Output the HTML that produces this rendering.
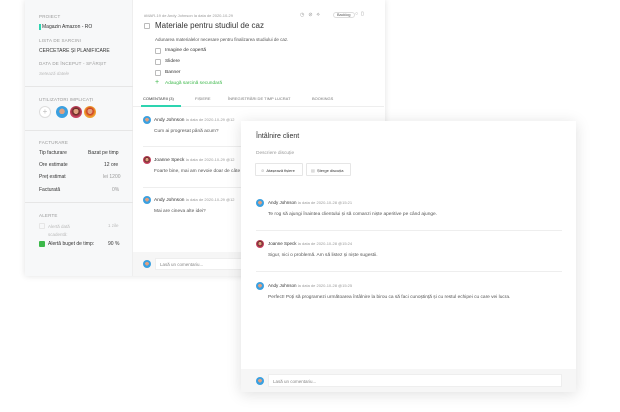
<!DOCTYPE html><html><head><meta charset="utf-8"><style>
*{margin:0;padding:0;box-sizing:border-box}
body{width:620px;height:412px;background:#fff;font-family:"Liberation Sans",sans-serif;position:relative;overflow:hidden;color:#333}
.a{position:absolute;white-space:nowrap}
.lab{font-size:4.5px;color:#999;letter-spacing:.2px}
.t{font-size:5.5px;color:#333}
.s{font-size:4px;color:#999}
.av{position:absolute;border-radius:50%;background:radial-gradient(circle at 50% 45%,#e0a080 0 30%,#3aa0e0 32%)}
.avp{background:radial-gradient(circle at 50% 45%,#e0a080 0 28%,#5a2a20 30%,#c84060 60%)}
.avo{background:radial-gradient(circle at 50% 45%,#e0a080 0 28%,#c83020 30%,#f0a030 60%)}
.cb{position:absolute;width:6px;height:6px;border:1px solid #bbb;border-radius:1px}
</style></head><body>
<!-- back window -->
<div class="a" style="left:25px;top:0;width:360px;height:276px;background:#fff;box-shadow:0 0 6px rgba(0,0,0,.12)"></div>
<div class="a" style="left:25px;top:0;width:108px;height:276px;background:#f7f8f9;border-right:1px solid #eee"></div>
<div class="a lab" style="left:39px;top:14px">PROIECT</div>
<div class="a" style="left:39px;top:24px;width:1.5px;height:6px;background:#2dd4b0"></div>
<div class="a t" style="left:42px;top:24px;font-size:5px">Magazin Amazon - RO</div>
<div class="a lab" style="left:39px;top:38px">LISTA DE SARCINI</div>
<div class="a t" style="left:39px;top:48px;font-size:5px">CERCETARE ȘI PLANIFICARE</div>
<div class="a lab" style="left:39px;top:61px">DATA DE ÎNCEPUT - SFÂRȘIT</div>
<div class="a" style="left:39px;top:71px;font-size:4.5px;color:#bbb;font-style:italic">Setează datele</div>
<div class="a" style="left:25px;top:86px;width:108px;height:1px;background:#e6e6e6"></div>
<div class="a lab" style="left:39px;top:97px">UTILIZATORI IMPLICAȚI</div>
<div class="a" style="left:39px;top:106px;width:12px;height:12px;border:1px solid #ddd;border-radius:50%;background:#fff;font-size:8px;color:#bbb;text-align:center;line-height:10px">+</div>
<div class="av" style="left:56px;top:106px;width:12px;height:12px"></div>
<div class="av avp" style="left:70px;top:106px;width:12px;height:12px"></div>
<div class="av avo" style="left:84px;top:106px;width:12px;height:12px"></div>
<div class="a" style="left:25px;top:130px;width:108px;height:1px;background:#e6e6e6"></div>
<div class="a lab" style="left:39px;top:140px">FACTURARE</div>
<div class="a t" style="left:39px;top:150px;font-size:5px">Tip facturare</div><div class="a t" style="left:88px;top:150px;font-size:5px">Bazat pe timp</div>
<div class="a t" style="left:39px;top:162px;font-size:5px">Ore estimate</div><div class="a t" style="left:104px;top:162px;font-size:5px">12 ore</div>
<div class="a t" style="left:39px;top:174px;font-size:5px">Preț estimat</div><div class="a" style="left:103px;top:174px;font-size:5px;color:#999">lei 1200</div>
<div class="a t" style="left:39px;top:187px;font-size:5px">Facturată</div><div class="a" style="left:112px;top:187px;font-size:5px;color:#999">0%</div>
<div class="a" style="left:25px;top:202px;width:108px;height:1px;background:#e6e6e6"></div>
<div class="a lab" style="left:39px;top:213px">ALERTE</div>
<div class="cb" style="left:39px;top:223px;border-color:#e6e6e6"></div>
<div class="a" style="left:48px;top:223px;font-size:4.5px;color:#bbb;line-height:8px">Alertă dată<br>scadentă:</div><div class="a" style="left:108px;top:223px;font-size:4.5px;color:#bbb">1 zile</div>
<div class="a" style="left:39px;top:241px;width:6px;height:6px;background:#3cb84a;border-radius:1px"></div>
<div class="a t" style="left:48px;top:241px;font-size:5px">Alertă buget de timp:</div><div class="a t" style="left:108px;top:241px;font-size:5px">90 %</div>
<!-- main back -->
<div class="a s" style="left:144px;top:13px">#MAR-19 de Andy Johnson la data de 2020-10-29</div>
<div class="a" style="left:300px;top:12px;font-size:5px;color:#999;letter-spacing:4px">◷⊘⟡</div>
<div class="a" style="left:333px;top:12px;font-size:3.8px;border:1px solid #ddd;border-radius:4px;padding:0 3px;color:#555">Backlog</div>
<div class="a" style="left:355px;top:11px;font-size:5px;color:#999;letter-spacing:3px">○▯</div>
<div class="cb" style="left:144px;top:23px"></div>
<div class="a" style="left:155px;top:21px;font-size:8px;color:#333">Materiale pentru studiul de caz</div>
<div class="a" style="left:155px;top:37px;font-size:4.5px;color:#555">Adunarea materialelor necesare pentru finalizarea studiului de caz.</div>
<div class="cb" style="left:155px;top:48px"></div><div class="a t" style="left:165px;top:48px;font-size:4.8px">Imagine de copertă</div>
<div class="cb" style="left:155px;top:59px"></div><div class="a t" style="left:165px;top:59px;font-size:4.8px">Slidere</div>
<div class="cb" style="left:155px;top:70px"></div><div class="a t" style="left:165px;top:70px;font-size:4.8px">Banner</div>
<div class="a" style="left:155px;top:79px;font-size:7px;color:#3cb84a">+</div><div class="a" style="left:165px;top:81px;font-size:4.8px;color:#3cb84a">Adaugă sarcină secundară</div>
<div class="a" style="left:133px;top:91px;width:251px;height:16px;border-bottom:1px solid #eee"></div>
<div class="a" style="left:143px;top:96px;font-size:4px;color:#333">COMENTARII (3)</div>
<div class="a" style="left:141px;top:105px;width:40px;height:1.5px;background:#2dd4b0"></div>
<div class="a" style="left:195px;top:96px;font-size:4px;color:#777">FIȘIERE</div>
<div class="a" style="left:228px;top:96px;font-size:4px;color:#777">ÎNREGISTRĂRI DE TIMP LUCRAT</div>
<div class="a" style="left:312px;top:96px;font-size:4px;color:#777">BOOKINGS</div>
<div class="av" style="left:143px;top:116px;width:8px;height:8px"></div>
<div class="a" style="left:154px;top:117px;font-size:4.8px;color:#333">Andy Johnson <span class="s">la data de 2020-10-29 @12</span></div>
<div class="a" style="left:154px;top:129px;font-size:4.8px;color:#555">Cum ai progresat până acum?</div>
<div class="a" style="left:143px;top:146px;width:98px;height:1px;background:#eee"></div>
<div class="av avp" style="left:143px;top:156px;width:8px;height:8px"></div>
<div class="a" style="left:154px;top:157px;font-size:4.8px;color:#333">Joanne Speck <span class="s">la data de 2020-10-29 @12</span></div>
<div class="a" style="left:154px;top:169px;font-size:4.8px;color:#555">Foarte bine, mai am nevoie doar de câte</div>
<div class="a" style="left:143px;top:187px;width:98px;height:1px;background:#eee"></div>
<div class="av" style="left:143px;top:196px;width:8px;height:8px"></div>
<div class="a" style="left:154px;top:197px;font-size:4.8px;color:#333">Andy Johnson <span class="s">la data de 2020-10-29 @12</span></div>
<div class="a" style="left:154px;top:209px;font-size:4.8px;color:#555">Mai are cineva alte idei?</div>
<div class="a" style="left:133px;top:252px;width:251px;height:24px;background:#f6f6f6"></div>
<div class="av" style="left:143px;top:260px;width:8px;height:8px"></div>
<div class="a" style="left:155px;top:258px;width:120px;height:12px;background:#fff;border:1px solid #eee;font-size:4.5px;color:#888;padding:3px 4px">Lasă un comentariu...</div>
<!-- front window -->
<div class="a" style="left:241px;top:121px;width:335px;height:271px;background:#fff;box-shadow:0 2px 14px rgba(0,0,0,.13)"></div>
<div class="a" style="left:256px;top:133px;font-size:7px;color:#333">Întâlnire client</div>
<div class="a" style="left:256px;top:151px;font-size:4.8px;color:#999">Descriere discuție</div>
<div class="a" style="left:255px;top:163px;width:48px;height:13px;border:1px solid #e6e6e6;border-radius:1px;font-size:4px;color:#333;padding:4px 0 0 5px"><span style="color:#aaa">⊘</span>&nbsp; Atașează fișiere</div>
<div class="a" style="left:306px;top:163px;width:45px;height:13px;border:1px solid #e6e6e6;border-radius:1px;font-size:4px;color:#333;padding:4px 0 0 4px"><span style="color:#aaa">▤</span>&nbsp; Șterge discuția</div>
<div class="av" style="left:256px;top:199px;width:8px;height:8px"></div>
<div class="a" style="left:268px;top:200px;font-size:4.5px;color:#333">Andy Johnson <span class="s">la data de 2020-10-28 @15:21</span></div>
<div class="a" style="left:268px;top:212px;font-size:4.8px;color:#555">Te rog să ajungi înaintea clientului și să comanzi niște aperitive pe când ajunge.</div>
<div class="a" style="left:256px;top:230px;width:306px;height:1px;background:#eee"></div>
<div class="av avp" style="left:256px;top:240px;width:8px;height:8px"></div>
<div class="a" style="left:268px;top:241px;font-size:4.5px;color:#333">Joanne Speck <span class="s">la data de 2020-10-28 @15:24</span></div>
<div class="a" style="left:268px;top:253px;font-size:4.8px;color:#555">Sigur, nici o problemă. Am să listez și niște sugestii.</div>
<div class="a" style="left:256px;top:271px;width:306px;height:1px;background:#eee"></div>
<div class="av" style="left:256px;top:282px;width:8px;height:8px"></div>
<div class="a" style="left:268px;top:283px;font-size:4.5px;color:#333">Andy Johnson <span class="s">la data de 2020-10-28 @15:25</span></div>
<div class="a" style="left:268px;top:295px;font-size:4.8px;color:#555">Perfect! Poți să programezi următoarea întâlnire la birou ca să faci cunoștință și cu restul echipei cu care vei lucra.</div>
<div class="a" style="left:241px;top:369px;width:335px;height:23px;background:#f6f6f6"></div>
<div class="av" style="left:256px;top:377px;width:8px;height:8px"></div>
<div class="a" style="left:268px;top:374px;width:294px;height:13px;background:#fff;border:1px solid #eee;font-size:4.5px;color:#888;padding:3.5px 4px">Lasă un comentariu...</div>
</body></html>
